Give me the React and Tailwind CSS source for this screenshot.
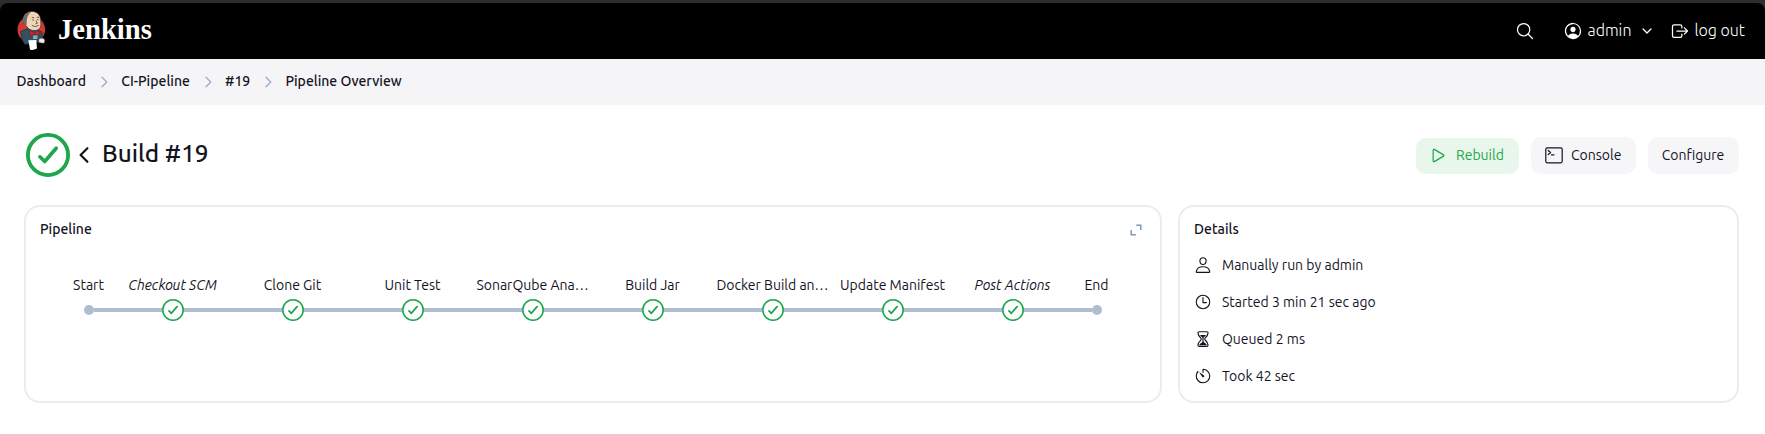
import React from "react";
import {
  IoSearchOutline, IoPersonCircleOutline, IoLogOutOutline, IoChevronDown, IoChevronBackOutline,
  IoPlayOutline, IoPersonOutline, IoTimeOutline, IoHourglassOutline, IoTimerOutline,
} from "react-icons/io5";

const STAGES = [
  { name: "Checkout SCM", italic: true },
  { name: "Clone Git" },
  { name: "Unit Test" },
  { name: "SonarQube Ana…" },
  { name: "Build Jar" },
  { name: "Docker Build an…" },
  { name: "Update Manifest" },
  { name: "Post Actions", italic: true },
];

const CRUMBS = ["Dashboard", "CI-Pipeline", "#19", "Pipeline Overview"];

function Logo() {
  return (
    <svg className="h-10 w-[29px] shrink-0" viewBox="0 0 29 40">
      <ellipse cx="14.3" cy="18.5" rx="13.8" ry="13.5" fill="#d33833" />
      <path d="M3.6 20.5 L10 18 L19 18.8 L25 21 L25.6 30 L20 31 L8 33.6 L5.5 29.5 Z" fill="#335061" stroke="#1b2a33" strokeWidth=".7" />
      <path d="M8 3.2 Q14 -1.8 20 1.8 Q24 4.6 23.8 11 Q25 18.6 18.5 19.6 Q11.8 19.8 9.6 15.2 Q6 14 6 9 Z" fill="#f0d6b7" stroke="#2a2320" strokeWidth=".7" />
      <path d="M6 10.5 Q5 5 9.6 2.6 Q13.5 .2 14 1.2 Q10 4 9.8 9.6 L9.6 14 Q6.5 14.5 6 10.5 Z" fill="#6d6b6d" />
      <path d="M14.8 6.8 Q16 5.8 17.2 7 M19.8 6.4 Q21 5.6 22 6.8 M15.3 9 H17 M20 8.6 H21.6 M19 9.5 L20.3 12.3 L18.4 12.8 M14.8 14.4 Q18 16.8 21.8 14.4" fill="none" stroke="#4a3b32" strokeWidth=".8" />
      <path d="M12.8 19.8 L17.5 21.8 L22.3 19.7 L21.9 24.4 L17.5 22.8 L13.2 25 Z" fill="#e11f26" stroke="#7c1518" strokeWidth=".4" />
      <path d="M16.2 24.4 L20.6 24.2 L20.2 28 H15.8 Z" fill="#81b0c4" />
      <path d="M11.3 29.2 L19.4 29 L19.9 37.6 Q15.5 39.8 13 38.4 Z" fill="#fff" />
      <path d="M22 28 Q25 26.5 27.2 28 Q28.6 30.6 26.6 32.2 L21.8 31.6 Z" fill="#f4e8dc" stroke="#665c55" strokeWidth=".4" />
    </svg>
  );
}

function Tick({ className, ring, stroke }) {
  return (
    <svg className={className} viewBox="0 0 44 44" fill="none" stroke="#1ea64b" strokeLinecap="round" strokeLinejoin="round">
      <circle cx="22" cy="22" r={22 - ring / 2} strokeWidth={ring} fill="#fff" />
      <path d="M13.9 23.8 L18.7 28.5 L30.2 15.2" strokeWidth={stroke} />
    </svg>
  );
}

function CrumbArrow() {
  return (
    <svg className="h-3 w-3" viewBox="0 0 12 12" fill="none" stroke="#9ab0cb" strokeWidth="1.4" strokeLinecap="round" strokeLinejoin="round">
      <path d="M4 1.2 L8.8 6 L4 10.8" />
    </svg>
  );
}

function Line({ on = true }) {
  return <span className={on ? "h-1 flex-1 bg-[#b0bdd1]" : "h-1 flex-1"} />;
}

function Stage({ name, italic }) {
  return (
    <div className="w-[120px]">
      <div className={italic ? "pr-px text-center text-sm leading-5 italic" : "pr-px text-center text-sm leading-5"}>{name}</div>
      <div className="mt-1 flex h-[22px] items-center">
        <Line />
        <Tick className="h-[22px] w-[22px]" ring={3.2} stroke={3.6} />
        <Line />
      </div>
    </div>
  );
}

function Terminal({ name, start }) {
  return (
    <div className="w-12">
      <div className="pr-px text-center text-sm leading-5">{name}</div>
      <div className="mt-1 flex h-[22px] items-center">
        <Line on={!start} />
        <span className="h-[10px] w-[10px] rounded-full bg-[#b0bdd1]" />
        <Line on={start} />
      </div>
    </div>
  );
}

function Detail({ icon, children }) {
  return (
    <div className="flex h-[37px] items-center">
      <span className="flex w-[18px] justify-center text-[18px]">{icon}</span>
      <span className="ml-[10px] text-sm">{children}</span>
    </div>
  );
}

export default function App() {
  return (
    <div className="h-[434px] w-[1765px] overflow-hidden bg-white font-['Ubuntu','Noto_Sans',sans-serif] text-[#14141f]">
      <div className="bg-[#2d2d2d] pt-[3px]">
        <header className="flex h-14 items-center rounded-t-[8px] bg-black pl-[17px] pr-[20px] text-white">
          <Logo />
          <span className="ml-[12px] -mt-[1px] font-['Liberation_Serif',serif] text-[28.6px] font-bold leading-none">Jenkins</span>
          <div className="ml-auto flex items-center text-base font-light">
            <IoSearchOutline className="mr-[28px] text-[20px]" />
            <IoPersonCircleOutline className="mr-[5px] text-[20px]" />
            <span className="-mt-[2px]">admin</span>
            <IoChevronDown className="ml-[9px] mr-[16px] text-[14px]" />
            <IoLogOutOutline className="mr-[4px] text-[20px]" />
            <span className="-mt-[2px]">log out</span>
          </div>
        </header>
      </div>
      <nav className="flex h-[46px] items-center bg-[#f5f5f8] pl-[16.5px] pb-[3px] text-sm font-medium">
        {CRUMBS.map((c, i) => (
          <React.Fragment key={c}>
            {i > 0 && <span className="ml-[12px] mr-[11.2px] mt-[2px]"><CrumbArrow /></span>}
            <span>{c}</span>
          </React.Fragment>
        ))}
      </nav>
      <div className="flex h-[100px] items-center pl-[26px] pr-[26px]">
        <Tick className="h-11 w-11" ring={3.8} stroke={3.6} />
        <IoChevronBackOutline className="ml-[2px] text-[24px]" />
        <h1 className="ml-[6px] -mt-[4px] text-[24.3px] font-medium">Build #19</h1>
        <div className="ml-auto flex items-end gap-3 text-sm">
          <button className="flex h-9 w-[103px] items-center rounded-[10px] bg-[#e8f6ec] pb-[2px] pl-[13px] text-[#1ea64b]">
            <IoPlayOutline className="mr-[8px] mt-[2px] text-[19px]" />Rebuild
          </button>
          <button className="flex h-[37px] w-[105px] items-center rounded-[10px] bg-[#f6f6f9] pb-px pl-[14px]">
            <svg className="mr-[8px] mt-px h-[18px] w-[18px]" viewBox="0 0 18 18" fill="none" stroke="currentColor" strokeWidth="1.2" strokeLinecap="round" strokeLinejoin="round">
              <rect x=".8" y="1.8" width="16.4" height="15" rx="1.5" /><path d="M3.2 4.5 L5.6 6.5 L3.2 8.5 M6.4 8.8 H9" />
            </svg>Console
          </button>
          <button className="h-[37px] w-[91px] rounded-[10px] bg-[#f6f6f9] pb-px pr-px">Configure</button>
        </div>
      </div>
      <main className="flex gap-4 pl-[24px] pr-[26px]">
        <section className="h-[198px] w-[1138px] rounded-[16px] border-2 border-[#ebebf2]">
          <div className="flex h-[33px] justify-between pl-[14px] pr-[18px] pt-[11px]">
            <h2 className="text-sm font-medium leading-[22px]">Pipeline</h2>
            <svg className="mt-[6px] h-3 w-3" viewBox="0 0 12 12" fill="none" stroke="#8198b5" strokeWidth="1.5">
              <path d="M6.2 1.2 H10.8 V6 M5.8 10.8 H1.2 V6" />
            </svg>
          </div>
          <div className="flex pl-[39px] pt-[35px]">
            <Terminal name="Start" start={true} />
            {STAGES.map((s) => <Stage key={s.name} {...s} />)}
            <Terminal name="End" start={false} />
          </div>
        </section>
        <section className="h-[198px] w-[561px] rounded-[16px] border-2 border-[#ebebf2] pl-[14px] pt-[11px]">
          <h2 className="text-sm font-medium leading-[22px]">Details</h2>
          <div className="mt-[6px]">
            <Detail icon={<IoPersonOutline />}>Manually run by admin</Detail>
            <Detail icon={<IoTimeOutline />}>Started 3 min 21 sec ago</Detail>
            <Detail icon={<IoHourglassOutline />}>Queued 2 ms</Detail>
            <Detail icon={<IoTimerOutline />}>Took 42 sec</Detail>
          </div>
        </section>
      </main>
    </div>
  );
}
